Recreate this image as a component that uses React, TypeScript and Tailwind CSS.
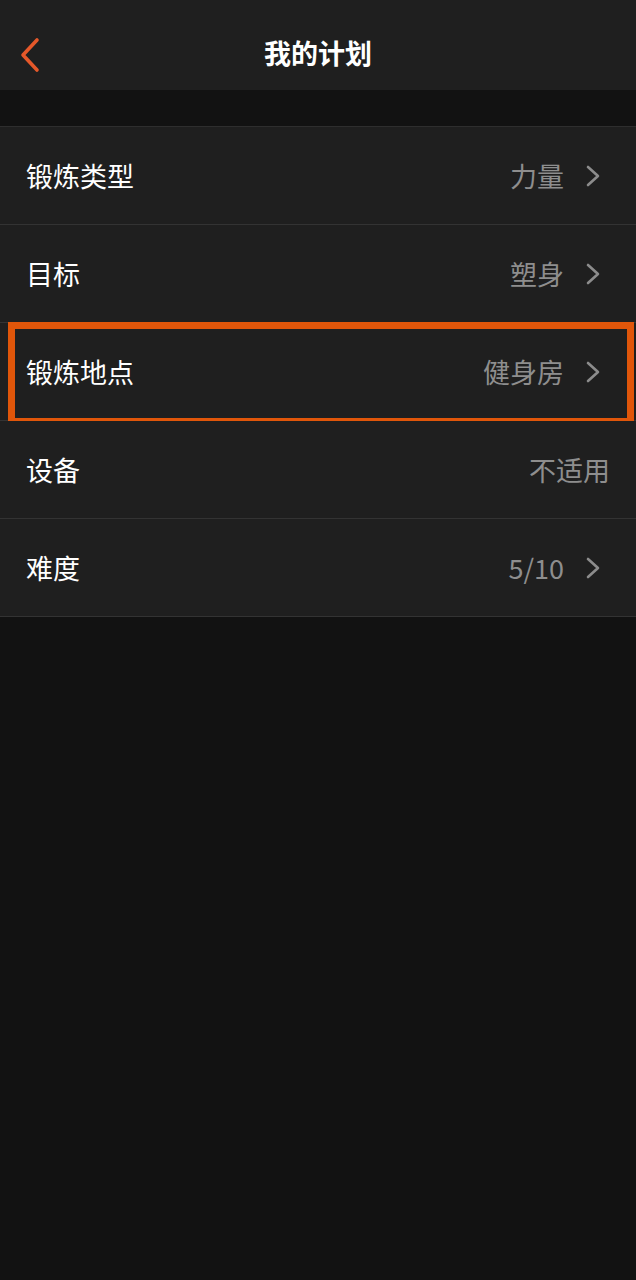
import React from "react";

const font = { fontFamily: '"Noto Sans CJK SC", "Noto Sans", sans-serif' };

function Chevron() {
  return (
    <svg width="18" height="24" viewBox="0 0 18 24" className="ml-[20px] mr-[34px]">
      <path d="M4 3 L14 12 L4 21" fill="none" stroke="#8c8c8c" strokeWidth="2.6" strokeLinecap="round" strokeLinejoin="round" />
    </svg>
  );
}

type Row = { label: string; value: string; chevron: boolean; highlight?: boolean };

const rows: Row[] = [
  { label: "锻炼类型", value: "力量", chevron: true },
  { label: "目标", value: "塑身", chevron: true },
  { label: "锻炼地点", value: "健身房", chevron: true, highlight: true },
  { label: "设备", value: "不适用", chevron: false },
  { label: "难度", value: "5/10", chevron: true },
];

export default function App() {
  return (
    <div className="w-[636px] h-[1280px] bg-[#121212]" style={font}>
      <div className="relative h-[90px] bg-[#1f1f1f] flex items-center justify-center pt-[14px]">
        <svg width="24" height="36" viewBox="0 0 24 36" className="absolute left-[18px] top-[37px]">
          <path d="M19 3 L5 18 L19 33" fill="none" stroke="#e5582a" strokeWidth="3.6" strokeLinecap="round" strokeLinejoin="round" />
        </svg>
        <span className="text-white text-[27px] font-bold leading-none">我的计划</span>
      </div>
      <div className="h-[36px]" />
      <div className="border-t border-[#2e2e2e]">
        {rows.map((r) => (
          <div key={r.label} className="relative h-[98px] bg-[#1f1f1f] border-b border-[#333333] flex items-center">
            <span className="pl-[26px] text-white text-[27px] leading-none">{r.label}</span>
            <div className="ml-auto flex items-center">
              <span className={`text-[#8e8e8e] text-[27px] leading-none ${r.chevron ? "" : "mr-[26px]"}`}>{r.value}</span>
              {r.chevron && <Chevron />}
            </div>
            {r.highlight && (
              <div className="absolute left-[8px] right-[2px] top-[-1px] bottom-[-5px] border-[7px] border-[#e0560a] pointer-events-none" />
            )}
          </div>
        ))}
      </div>
    </div>
  );
}
